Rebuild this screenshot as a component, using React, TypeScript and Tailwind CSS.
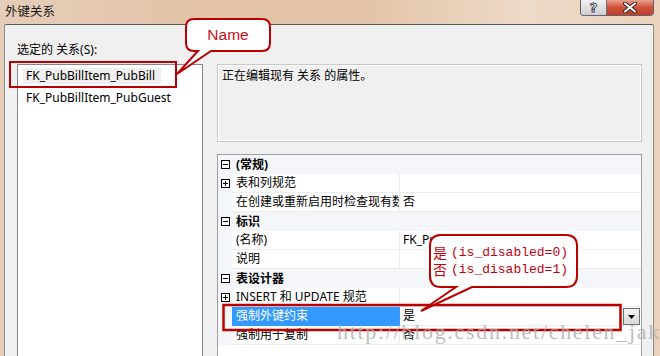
import React from "react";

type Row = {
  kind: "cat" | "prop";
  exp?: "+" | "-";
  name: string;
  value?: string;
  selected?: boolean;
};

const rows: Row[] = [
  { kind: "cat", exp: "-", name: "(常规)" },
  { kind: "prop", exp: "+", name: "表和列规范", value: "" },
  { kind: "prop", name: "在创建或重新启用时检查现有数据", value: "否" },
  { kind: "cat", exp: "-", name: "标识" },
  { kind: "prop", name: "(名称)", value: "FK_PubBillItem_PubBill" },
  { kind: "prop", name: "说明", value: "" },
  { kind: "cat", exp: "-", name: "表设计器" },
  { kind: "prop", exp: "+", name: "INSERT 和 UPDATE 规范", value: "" },
  { kind: "prop", name: "强制外键约束", value: "是", selected: true },
  { kind: "prop", name: "强制用于复制", value: "否" },
];

function ExpBox({ sign }: { sign: "+" | "-" }) {
  return (
    <svg width="9" height="9" viewBox="0 0 9 9" className="block">
      <rect x="0.5" y="0.5" width="8" height="8" fill="white" stroke="#000" strokeWidth="1" />
      <line x1="2" y1="4.5" x2="7" y2="4.5" stroke="#000" strokeWidth="1" />
      {sign === "+" && <line x1="4.5" y1="2" x2="4.5" y2="7" stroke="#000" strokeWidth="1" />}
    </svg>
  );
}

function GridRow({ r }: { r: Row }) {
  if (r.kind === "cat") {
    return (
      <div className="flex h-[19px] bg-[#f4f6fa] items-center">
        <div className="w-[14px] flex justify-center pl-[1px]">{r.exp && <ExpBox sign={r.exp} />}</div>
        <div className="pl-[4px] font-bold leading-[19px]">{r.name}</div>
      </div>
    );
  }
  return (
    <div className="flex h-[19px]">
      <div className="w-[14px] bg-[#f4f6fa] flex justify-center items-center pl-[1px]">
        {r.exp && <ExpBox sign={r.exp} />}
      </div>
      <div
        className={
          r.selected
            ? "w-[168px] pl-[4px] leading-[18px] bg-[#3399ff] text-white whitespace-nowrap overflow-hidden border-r border-[#3399ff]"
            : "w-[168px] pl-[4px] leading-[18px] bg-white whitespace-nowrap overflow-hidden border-r border-b border-[#ededed]"
        }
      >
        {r.name}
      </div>
      <div className="flex-1 flex items-start pl-[3px] leading-[18px] border-b border-[#ededed] whitespace-nowrap overflow-hidden">
        <span className="flex-1">{r.value}</span>
        {r.selected && (
          <div className="mt-[1px] mr-[1px] w-[17px] h-[17px] border border-[#707070] bg-gradient-to-b from-[#f4f4f4] to-[#d9d9d9] flex items-center justify-center">
            <svg width="7" height="4" viewBox="0 0 7 4">
              <path d="M0 0 H7 L3.5 4 Z" fill="#000" />
            </svg>
          </div>
        )}
      </div>
    </div>
  );
}

export default function App() {
  return (
    <div className="relative w-[660px] h-[356px] overflow-hidden flex flex-col text-[12px] text-black font-['Noto_Sans','Noto_Sans_CJK_SC',sans-serif] bg-[linear-gradient(90deg,#e6cdb9_0%,#e2c3a8_30%,#e3c4a8_55%,#eedac8_80%,#ead2bc_100%)]">
      {/* title bar */}
      <div className="h-[24px] flex items-start shrink-0">
        <div className="pl-[5px] pt-[3px] leading-[18px] text-[12.5px] text-[#1a1a1a]">外键关系</div>
        <div className="ml-auto mr-[6px] flex h-[16px] border border-t-0 border-[#5e6470] rounded-b-[4px] overflow-hidden">
          <div className="w-[26px] h-full bg-gradient-to-b from-[#f2f2f2] to-[#cfcfcf] flex items-center justify-center border-r border-[#6a6f78]">
            <span className="font-['DejaVu_Sans',sans-serif] font-bold text-[13px] leading-[14px] text-white [-webkit-text-stroke:1px_#4a4f5a]">?</span>
          </div>
          <div className="w-[46px] h-full bg-gradient-to-b from-[#e8a090] via-[#d0503a] to-[#c0402e] flex items-center justify-center">
            <svg width="14" height="11" viewBox="0 0 14 11">
              <path d="M2 1.5 L12 9.5 M12 1.5 L2 9.5" stroke="#3a2a2a" strokeWidth="4" strokeLinecap="round" />
              <path d="M2 1.5 L12 9.5 M12 1.5 L2 9.5" stroke="#ffffff" strokeWidth="2" strokeLinecap="round" />
            </svg>
          </div>
        </div>
      </div>

      {/* body */}
      <div className="flex-1 min-h-0 ml-[4px] mr-[6px] bg-[#f0f0f0] border border-b-0 border-[#8c8c8c] border-t-[#5a5a5a] rounded-t-[2px] flex pl-[12px] pt-[17px]">
        <div className="w-[186px] flex flex-col">
          <div className="h-[16px] leading-[16px]">选定的 关系(S):</div>
          <div className="mt-[6px] flex-1 bg-white border border-b-0 border-[#828790]">
            <div className="h-[22px] flex items-center pl-[5px]">
              <span className="h-[16px] leading-[16px] px-[3px] bg-[#efefef] pr-[6px]">FK_PubBillItem_PubBill</span>
            </div>
            <div className="h-[22px] flex items-center pl-[5px]">
              <span className="h-[16px] leading-[16px] px-[3px]">FK_PubBillItem_PubGuest</span>
            </div>
          </div>
        </div>
        <div className="ml-[14px] w-[425px] flex flex-col pt-[22px]">
          <div className="h-[78px] border border-[#c9c9c9] shadow-[inset_1px_1px_0_#ffffff,inset_-1px_-1px_0_#ffffff] px-[4px] pt-[3px] leading-[16px]">
            正在编辑现有 关系 的属性。
          </div>
          <div className="mt-[12px] flex-1 bg-white border border-b-0 border-[#a0a0a0]">
            {rows.map((r, i) => (
              <GridRow key={i} r={r} />
            ))}
          </div>
        </div>
      </div>

      {/* callouts & highlight overlays */}
      <svg className="absolute inset-0 pointer-events-none" width="660" height="356" viewBox="0 0 660 356">
        <rect x="10" y="62" width="166" height="25" fill="none" stroke="#bb0000" strokeWidth="2" />
        <rect x="223.5" y="305" width="397" height="25" fill="none" stroke="#bb0000" strokeWidth="2.5" />
        <path
          d="M194 19 H262 Q270 19 270 27 V43 Q270 51 262 51 H211 L177 74 L198 51 H194 Q186 51 186 43 V27 Q186 19 194 19 Z"
          fill="#ffffff"
          stroke="#bb0000"
          strokeWidth="2"
          strokeLinejoin="miter"
        />
        <path
          d="M441 235 H566 Q577 235 577 246 V276 Q577 287 566 287 H472 L421 311 L456 287 H441 Q430 287 430 276 V246 Q430 235 441 235 Z"
          fill="#ffffff"
          stroke="#bb0000"
          strokeWidth="2"
        />
      </svg>

      <div className="absolute left-[186px] top-[19px] w-[84px] h-[32px] flex items-center justify-center text-[15.5px] text-[#cc1020] font-['Liberation_Sans',sans-serif]">
        Name
      </div>
      <div className="absolute left-[433px] top-[244px] flex flex-col text-[#c00010] leading-[17px]">
        <div className="flex items-center">
          <span className="text-[14px] font-['Noto_Sans_CJK_SC',sans-serif]">是</span>
          <span className="ml-[4px] text-[13px] font-['Liberation_Mono',monospace]">(is_disabled=0)</span>
        </div>
        <div className="flex items-center">
          <span className="text-[14px] font-['Noto_Sans_CJK_SC',sans-serif]">否</span>
          <span className="ml-[4px] text-[13px] font-['Liberation_Mono',monospace]">(is_disabled=1)</span>
        </div>
      </div>

      {/* watermark */}
      <div className="absolute left-[337px] top-[319px] text-[22px] leading-[26px] tracking-[1.7px] text-[#adadad]/80 font-['Liberation_Serif',serif] whitespace-nowrap pointer-events-none">
        http://blog.csdn.net/chelen_jak
      </div>
    </div>
  );
}
